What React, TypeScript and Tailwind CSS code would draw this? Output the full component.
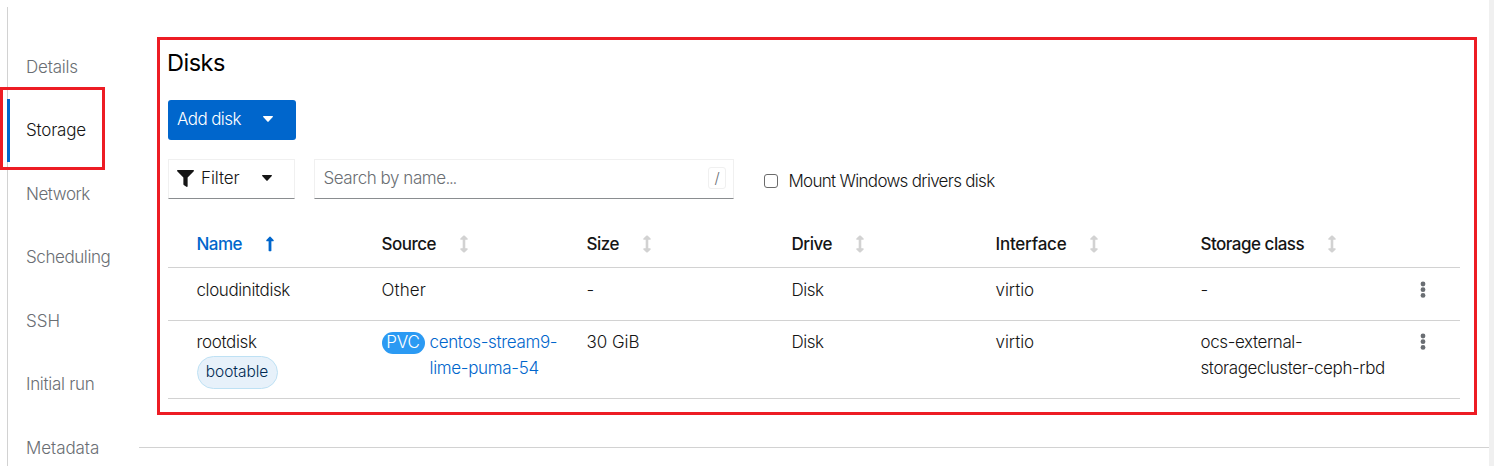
import React from "react";

const navItems = [
  { label: "Details", tracking: "tracking-[-0.2px]" },
  { label: "Storage", tracking: "tracking-[-0.2px]", active: true },
  { label: "Network", tracking: "tracking-[-0.45px]" },
  { label: "Scheduling", tracking: "tracking-[-0.42px]" },
  { label: "SSH", tracking: "tracking-[0px]" },
  { label: "Initial run", tracking: "tracking-[-0.3px]" },
  { label: "Metadata", tracking: "tracking-[-0.07px]" },
];

const columns = [
  { label: "Name", tracking: "tracking-[-0.5px]", sorted: true },
  { label: "Source", tracking: "tracking-[-0.5px]" },
  { label: "Size", tracking: "tracking-[-0.5px]" },
  { label: "Drive", tracking: "tracking-[-0.45px]" },
  { label: "Interface", tracking: "tracking-[-0.22px]" },
  { label: "Storage class", tracking: "tracking-[-0.5px]" },
];

const gridClass =
  "grid grid-cols-[185px_205px_205px_204px_205px_1fr] border-b border-[#d2d2d2] pl-[28.5px]";

function Caret() {
  return (
    <svg width="10" height="6" viewBox="0 0 10 6" fill="currentColor">
      <path d="M.7 0h8.6c.6 0 .9.7.5 1.1L5.6 5.6a.8.8 0 0 1-1.2 0L.2 1.1C-.2.7.1 0 .7 0Z" />
    </svg>
  );
}

function FilterIcon() {
  return (
    <svg width="17" height="17" viewBox="0 0 512 512" fill="currentColor">
      <path d="M487.976 0H24.028C2.71 0-8.047 25.866 7.058 40.971L192 225.941V432c0 7.831 3.821 15.17 10.237 19.662l80 55.98C298.02 518.69 320 507.493 320 487.98V225.941l184.947-184.97C520.021 25.896 509.338 0 487.976 0z" />
    </svg>
  );
}

function SortIcon() {
  return (
    <svg width="8" height="18" viewBox="0 0 8 18" className="text-[#d2d2d2]" fill="currentColor">
      <path d="M2.700 13.200V4.800H1C.3 4.800 0 4 .4 3.500L3.500.6a.8.8 0 0 1 1 0l3.100 2.900c.4.5.1 1.300-.6 1.300H5.300v8.400H7c.7 0 1 .8.6 1.300l-3.100 2.900a.8.8 0 0 1-1 0L.4 14.500C0 14 .3 13.200 1 13.200Z" />
    </svg>
  );
}

function SortedIcon() {
  return (
    <svg width="8" height="16" viewBox="0 0 8 16" fill="currentColor">
      <path d="M2.600 5.300v9.500c0 .3.200.5.500.5h1.800c.3 0 .5-.2.500-.5V5.300H7c.7 0 1-.8.6-1.300L4.500.8a.8.8 0 0 0-1 0L.4 4C0 4.500.3 5.300 1 5.300Z" />
    </svg>
  );
}

function Kebab() {
  return (
    <button className="flex h-[26px] w-[6px] items-center text-[#6a6e73]" aria-label="Actions">
      <svg width="6" height="18" viewBox="0 0 6 18" fill="currentColor">
        <circle cx="3" cy="3" r="2.4" />
        <circle cx="3" cy="8.700" r="2.4" />
        <circle cx="3" cy="14.400" r="2.4" />
      </svg>
    </button>
  );
}

export default function App() {
  return (
    <div className="relative flex h-[466px] w-[1494px] overflow-hidden bg-white font-['Inter',sans-serif] text-[17px] leading-[26px] font-[350] text-[#151515]">
      <nav className="w-[139px] shrink-0 pt-[7px] pl-[7px]">
        <ul className="h-[459px] border-l border-[#d2d2d2] pt-7">
          {navItems.map((item) => (
            <li
              key={item.label}
              className={
                item.active
                  ? "-ml-px flex h-[63.5px] items-center border-l-[3px] border-[#06c] pl-4"
                  : "flex h-[63.5px] items-center pl-[18px] text-[#6a6e73]"
              }
            >
              <span className={item.tracking}>{item.label}</span>
            </li>
          ))}
        </ul>
      </nav>
      <div className="pointer-events-none absolute top-[87px] left-0 h-[83px] w-[105px] border-[3px] border-[#ed1c24]" />

      <main className="flex-1 pt-[37px]">
        <section className="ml-[18px] h-[378px] w-[1320px] border-[3px] border-[#ed1c24] pt-[10px] pr-[14px] pl-2">
          <h2 className="-ml-px text-[23.5px] leading-[26px] font-normal tracking-[-0.5px] text-black">Disks</h2>
          <button className="mt-6 flex h-10 w-32 items-center rounded-[3px] bg-[#06c] pb-[2px] pl-[9px] text-white">
            <span className="w-[86px] text-left tracking-[-0.6px]">Add disk</span>
            <Caret />
          </button>
          <div className="mt-[19px] flex h-10">
            <button className="flex w-[127px] items-center border border-[#f0f0f0] border-b-[#8a8d90] pb-[2px] pl-2">
              <FilterIcon />
              <span className="ml-[7px] w-[61px] text-left tracking-[-0.1px]">Filter</span>
              <Caret />
            </button>
            <div className="ml-[19px] flex w-[420px] items-center justify-between border border-[#f0f0f0] border-b-[#8a8d90] pr-[7px] pb-[2px] pl-[8.5px] text-[#6a6e73]">
              <span className="tracking-[-0.45px]">Search by name<span className="tracking-[-1.3px]">...</span></span>
              <span className="flex h-[22px] w-[18px] items-center justify-center rounded-[3px] border border-[#f0f0f0] text-[15px]">/</span>
            </div>
            <label className="ml-[30px] flex items-center gap-[10.5px] pt-1">
              <span className="size-[14px] rounded-[3px] border border-[#6b6b6b]" />
              <span className="tracking-[-0.7px]">Mount Windows drivers disk</span>
            </label>
          </div>

          <div className={`${gridClass} pt-8 pb-[10px] font-[550]`}>
            {columns.map((c) => (
              <div key={c.label} className={c.sorted ? "flex items-center gap-6 text-[#06c]" : "flex items-center gap-6"}>
                <span className={c.tracking}>{c.label}</span>
                {c.sorted ? <SortedIcon /> : <SortIcon />}
              </div>
            ))}
          </div>

          <div className={`${gridClass} pt-[9px] pb-[17px]`}>
            <span className="tracking-[-0.4px]">cloudinitdisk</span>
            <span className="tracking-[0.1px]">Other</span>
            <span>-</span>
            <span className="tracking-[-0.5px]">Disk</span>
            <span className="tracking-[-0.05px]">virtio</span>
            <div className="flex justify-between pr-[34px]">
              <span>-</span>
              <Kebab />
            </div>
          </div>

          <div className={`${gridClass} h-[78px] pt-2`}>
            <div>
              <div className="tracking-[-0.35px]">rootdisk</div>
              <div className="mt-px flex h-[33px] w-[81px] items-center justify-center rounded-full border border-[#bee1f4] bg-[#e7f1fa] pb-[2px] text-[15.5px] text-[#002952]">
                <span className="tracking-[-0.05px]">bootable</span>
              </div>
            </div>
            <div className="flex">
              <span className="mt-[3px] mr-[5px] flex h-[22px] w-[43px] items-center justify-center rounded-full bg-[#2b9af3] pb-[2px] tracking-[-0.1px] text-white">
                PVC
              </span>
              <div className="text-[#06c]">
                <div className="tracking-[-0.33px]">centos-stream9-</div>
                <div className="tracking-[-0.33px]">lime-puma-54</div>
              </div>
            </div>
            <span className="tracking-[-0.05px]">30 GiB</span>
            <span className="tracking-[-0.5px]">Disk</span>
            <span className="tracking-[-0.05px]">virtio</span>
            <div className="flex justify-between pr-[34px]">
              <div>
                <div className="tracking-[-0.4px]">ocs-external-</div>
                <div className="tracking-[-0.4px]">storagecluster-ceph-rbd</div>
              </div>
              <Kebab />
            </div>
          </div>
        </section>
        <hr className="mt-8 border-[#d2d2d2]" />
      </main>
      <div className="w-[5px] shrink-0 bg-[#f0f0f0]" />
    </div>
  );
}
